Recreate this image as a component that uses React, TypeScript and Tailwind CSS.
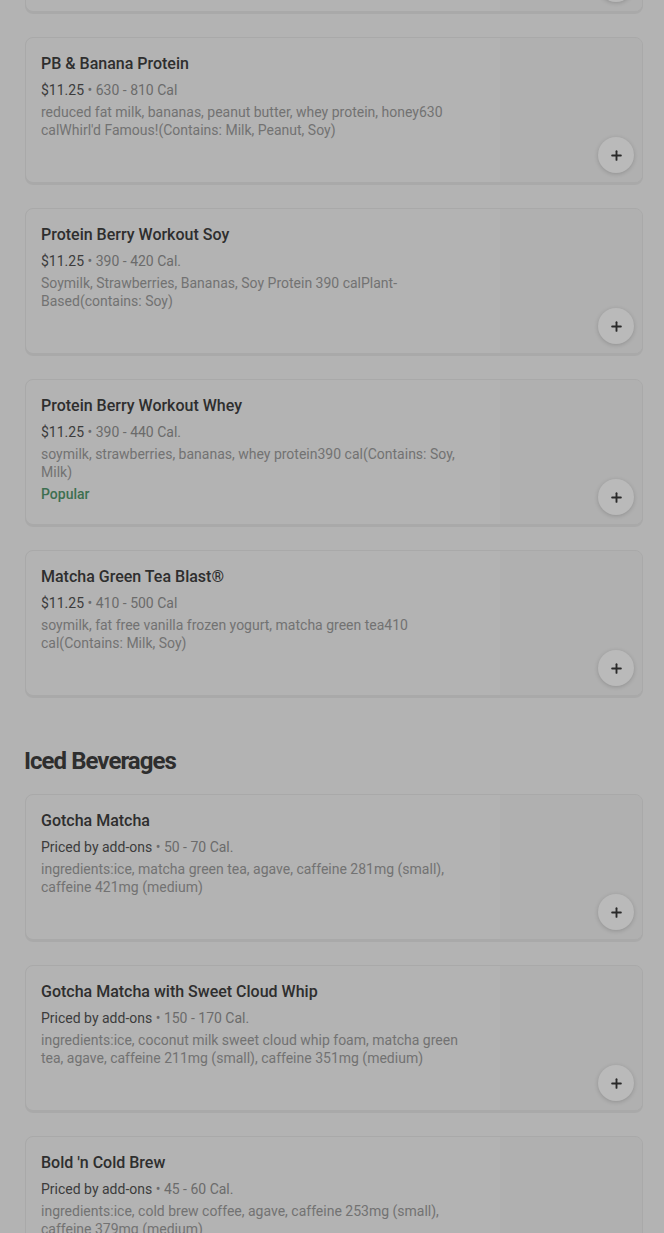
import { Plus } from 'lucide-react';

interface MenuItem {
	name: string;
	price: string;
	cal: string;
	desc: string;
	popular?: boolean;
}

const smoothies: MenuItem[] = [
	{
		name: 'PB & Banana Protein',
		price: '$11.25',
		cal: '630 - 810 Cal',
		desc: "reduced fat milk, bananas, peanut butter, whey protein, honey630 calWhirl'd Famous!(Contains: Milk, Peanut, Soy)",
	},
	{
		name: 'Protein Berry Workout Soy',
		price: '$11.25',
		cal: '390 - 420 Cal.',
		desc: 'Soymilk, Strawberries, Bananas, Soy Protein 390 calPlant-Based(contains: Soy)',
	},
	{
		name: 'Protein Berry Workout Whey',
		price: '$11.25',
		cal: '390 - 440 Cal.',
		desc: 'soymilk, strawberries, bananas, whey protein390 cal(Contains: Soy, Milk)',
		popular: true,
	},
	{
		name: 'Matcha Green Tea Blast®',
		price: '$11.25',
		cal: '410 - 500 Cal',
		desc: 'soymilk, fat free vanilla frozen yogurt, matcha green tea410 cal(Contains: Milk, Soy)',
	},
];

const iced: MenuItem[] = [
	{
		name: 'Gotcha Matcha',
		price: 'Priced by add-ons',
		cal: '50 - 70 Cal.',
		desc: 'ingredients:ice, matcha green tea, agave, caffeine 281mg (small), caffeine 421mg (medium)',
	},
	{
		name: 'Gotcha Matcha with Sweet Cloud Whip',
		price: 'Priced by add-ons',
		cal: '150 - 170 Cal.',
		desc: 'ingredients:ice, coconut milk sweet cloud whip foam, matcha green tea, agave, caffeine 211mg (small), caffeine 351mg (medium)',
	},
	{
		name: "Bold 'n Cold Brew",
		price: 'Priced by add-ons',
		cal: '45 - 60 Cal.',
		desc: 'ingredients:ice, cold brew coffee, agave, caffeine 253mg (small), caffeine 379mg (medium)',
	},
];

function CardShell({ children }: { children?: React.ReactNode }) {
	return (
		<div className="flex h-[146px] rounded-lg border border-[#a9a9a9] bg-[#b3b3b3] shadow-[0_2px_0_rgba(0,0,0,0.05)] overflow-hidden">
			<div className="flex-1 min-w-0 pl-[15px] pr-6 pt-4">{children}</div>
			<div className="relative w-[142px] shrink-0 bg-[#b0b0b0]">
				<button className="absolute right-2 bottom-[9px] flex h-9 w-9 items-center justify-center rounded-full bg-[#bababa] shadow-[0_1px_4px_rgba(0,0,0,0.18)] text-[#2a2a2a]">
					<Plus size={15} strokeWidth={3} />
				</button>
			</div>
		</div>
	);
}

function ItemCard({ item }: { item: MenuItem }) {
	return (
		<CardShell>
			<div className="text-[16px] leading-5 font-medium text-[#2e2e2e]">
				{item.name}
			</div>
			<div className="mt-2 text-[14px] leading-4">
				<span className="text-[#3c3c3c]">{item.price}</span>
				<span className="text-[#6b6b6b]"> • {item.cal}</span>
			</div>
			<div className="mt-[5px] text-[14px] leading-[18px] text-[#727272]">
				{item.desc}
			</div>
			{item.popular && (
				<div className="mt-1 text-[14px] leading-[18px] font-medium text-[#3d6f50]">
					Popular
				</div>
			)}
		</CardShell>
	);
}

export default function App() {
	return (
		<div
			className="h-[1233px] overflow-hidden bg-[#b3b3b3]"
			style={{ fontFamily: 'Roboto, "Liberation Sans", sans-serif' }}
		>
			<div className="mt-[-134px] pl-[25px] pr-[21px]">
				<div className="flex flex-col gap-[25px]">
					<CardShell />
					{smoothies.map((item) => (
						<ItemCard key={item.name} item={item} />
					))}
				</div>
				<h2 className="mt-[50px] mb-[18px] -ml-px text-[24px] leading-[30px] font-bold tracking-[-0.04em] text-[#2e2e2e]">
					Iced Beverages
				</h2>
				<div className="flex flex-col gap-[25px]">
					{iced.map((item) => (
						<ItemCard key={item.name} item={item} />
					))}
				</div>
			</div>
		</div>
	);
}
